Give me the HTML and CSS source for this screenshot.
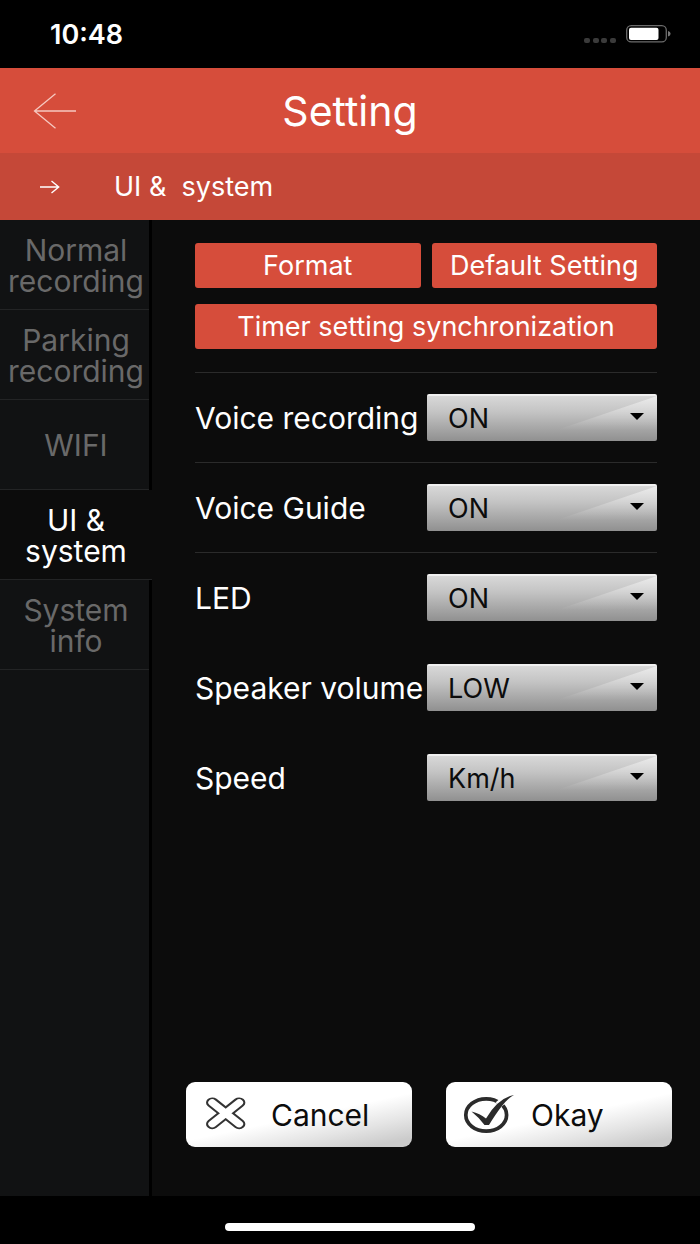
FILE: index.html
```html
<!DOCTYPE html>
<html lang="en">
<head>
    <meta charset="UTF-8">
    <meta name="viewport" content="width=device-width, initial-scale=1.0">
    <title>Setting</title>
    <link rel="stylesheet" href="styles.css">
</head>
<body>
    <!-- Status bar -->
    <div class="status-bar">
        <span class="time">10:48</span>
        <div class="status-icons">
            <svg width="32" height="5" viewBox="0 0 32 5" fill="#3a3a3a">
                <rect x="0" y="0" width="6" height="5" rx="2"/>
                <rect x="9" y="0" width="6" height="5" rx="2"/>
                <rect x="17" y="0" width="6" height="5" rx="2"/>
                <rect x="26" y="0" width="6" height="5" rx="2"/>
            </svg>
            <svg class="battery" width="45" height="18" viewBox="0 0 45 18">
                <rect x="0.7" y="0.7" width="39.6" height="16.2" rx="4.5" fill="none" stroke="#6b6b6b" stroke-width="1.3"/>
                <rect x="3" y="2.7" width="29.5" height="12.2" rx="2" fill="#fff"/>
                <path d="M42 6 Q44.6 6.5 44.6 8.8 T42 11.6 Z" fill="#777"/>
            </svg>
        </div>
    </div>

    <header class="header">
        <a class="back" href="#" aria-label="Back">
            <svg width="44" height="36" viewBox="0 0 44 36" fill="none" stroke="#f6c8c0" stroke-width="1.3">
                <path d="M22.5 0.8 L1.5 18 L22.5 35.2 M1.5 18 H43"/>
            </svg>
        </a>
        <h1>Setting</h1>
    </header>

    <div class="sub-header">
        <svg width="20" height="14" viewBox="0 0 20 14" fill="none" stroke="#fff" stroke-width="1.4">
            <path d="M0 7 H18.5 M11.5 1 L18.7 7 L11.5 13"/>
        </svg>
        <h2>UI &amp;  system</h2>
    </div>

    <div class="content">
        <nav class="sidebar">
            <a href="#">Normal recording</a>
            <a href="#">Parking recording</a>
            <a href="#">WIFI</a>
            <a href="#" class="active">UI &amp; system</a>
            <a href="#">System info</a>
        </nav>

        <main class="main">
            <div class="settings">
                <div class="actions">
                    <button type="button" class="btn-red">Format</button>
                    <button type="button" class="btn-red">Default Setting</button>
                    <button type="button" class="btn-red wide">Timer setting synchronization</button>
                </div>

                <div class="row line">
                    <label for="voiceRecording">Voice recording</label>
                    <select id="voiceRecording">
                        <option selected>ON</option>
                        <option>OFF</option>
                    </select>
                </div>
                <div class="row line">
                    <label for="voiceGuide">Voice Guide</label>
                    <select id="voiceGuide">
                        <option selected>ON</option>
                        <option>OFF</option>
                    </select>
                </div>
                <div class="row line">
                    <label for="led">LED</label>
                    <select id="led">
                        <option selected>ON</option>
                        <option>OFF</option>
                    </select>
                </div>
                <div class="row">
                    <label for="volume">Speaker volume</label>
                    <select id="volume">
                        <option selected>LOW</option>
                        <option>HIGH</option>
                    </select>
                </div>
                <div class="row">
                    <label for="speed">Speed</label>
                    <select id="speed">
                        <option selected>Km/h</option>
                        <option>MPH</option>
                    </select>
                </div>
            </div>

            <div class="footer-buttons">
                <button type="button" class="btn-white">
                    <svg width="52" height="42" viewBox="0 0 52 42">
                        <g transform="translate(23.7 19.3) scale(1.2 1)" fill="none" stroke-linecap="round">
                            <path d="M-11.2 -10.7 L11.2 10.7 M11.2 -10.7 L-11.2 10.7" stroke="#333" stroke-width="10.4"/>
                            <path d="M-11.2 -10.7 L11.2 10.7 M11.2 -10.7 L-11.2 10.7" stroke="#fff" stroke-width="6.6"/>
                        </g>
                    </svg>
                    <span>Cancel</span>
                </button>
                <button type="button" class="btn-white">
                    <svg width="52" height="42" viewBox="0 0 52 42">
                        <ellipse cx="24.2" cy="21" rx="20.4" ry="16.2" fill="none" stroke="#2b2b2b" stroke-width="3.7"/>
                        <path d="M36 11 L42 6" stroke="#fff" stroke-width="7"/>
                        <path d="M9.5 17.5 Q18 19.5 24 24.5 Q36 4 52 1 Q43 5 27 31 H22.5 Q17 23.500 9.5 17.5 Z" fill="#2b2b2b"/>
                    </svg>
                    <span>Okay</span>
                </button>
            </div>
        </main>
    </div>

    <div class="home-bar">
        <div class="home-indicator"></div>
    </div>
</body>
</html>
```
FILE: styles.css
```css
* {
    margin: 0;
    padding: 0;
    box-sizing: border-box;
}

body {
    font-family: Inter, 'Liberation Sans', sans-serif;
    background-color: #000;
    color: #fff;
    min-height: 100vh;
    display: flex;
    flex-direction: column;
}

svg {
    display: block;
    flex-shrink: 0;
}

a {
    color: inherit;
    text-decoration: none;
}

button, select {
    font-family: inherit;
    border: none;
    cursor: pointer;
}

/* Status bar */
.status-bar {
    height: 68px;
    padding: 0 29px 0 50px;
    display: flex;
    justify-content: space-between;
    align-items: center;
}

.time {
    font-size: 27px;
    font-weight: 600;
}

.status-icons {
    display: flex;
    align-items: flex-end;
    gap: 10px;
}

/* Header */
.header {
    height: 85px;
    padding: 0 33px;
    background-color: #d64d3b;
    display: grid;
    grid-template-columns: 44px 1fr 44px;
    align-items: center;
}

.header h1 {
    font-size: 41px;
    font-weight: 400;
    text-align: center;
}

.sub-header {
    height: 67px;
    padding: 0 40px;
    background-color: #c54838;
    display: flex;
    align-items: center;
    gap: 54px;
}

.sub-header h2 {
    font-size: 27px;
    font-weight: 400;
    white-space: pre;
}

/* Content */
.content {
    flex: 1;
    display: flex;
    background-color: #0c0c0c;
}

.sidebar {
    width: 152px;
    flex-shrink: 0;
    background-color: #111213;
    border-right: 3px solid #000;
}

.sidebar a {
    height: 90px;
    padding: 2px 0 0 3px;
    border-bottom: 1px solid #232425;
    display: flex;
    align-items: center;
    justify-content: center;
    text-align: center;
    font-size: 30px;
    line-height: 31px;
    color: #696969;
}

.sidebar a.active {
    margin-right: -3px;
    padding-left: 0;
    background-color: #0c0c0c;
    color: #fff;
}

.main {
    flex: 1;
    display: flex;
    flex-direction: column;
    justify-content: space-between;
    padding-bottom: 49px;
}

.settings {
    padding: 23px 43px 0;
}

.actions {
    display: grid;
    grid-template-columns: 1fr 1fr;
    gap: 16px 11px;
    margin-bottom: 23px;
}

.btn-red {
    height: 45px;
    border-radius: 3px;
    background-color: #d64d3b;
    color: #fff;
    font-size: 27px;
    white-space: nowrap;
}

.btn-red.wide {
    grid-column: 1 / 3;
}

.row {
    height: 90px;
    border-top: 1px solid transparent;
    display: flex;
    align-items: center;
    justify-content: space-between;
}

.row.line {
    border-top-color: #2b2b2b;
}

.row label {
    font-size: 30px;
    white-space: nowrap;
}

.row select {
    width: 230px;
    height: 47px;
    padding-left: 21px;
    appearance: none;
    border-top: 2px solid #f0f0f0;
    border-radius: 2px;
    font-size: 27px;
    color: #0c0c0c;
    /* arrow, gloss in the top right corner, base */
    background:
        url("data:image/svg+xml,%3Csvg xmlns='http://www.w3.org/2000/svg' width='14' height='7'%3E%3Cpath d='M0 0H14L7 7Z'/%3E%3C/svg%3E") no-repeat right 13px top 17px,
        url("data:image/svg+xml,%3Csvg xmlns='http://www.w3.org/2000/svg' width='100' height='45'%3E%3Cdefs%3E%3ClinearGradient id='g' x1='0' y1='0' x2='0' y2='1'%3E%3Cstop offset='0' stop-color='white' stop-opacity='.5'/%3E%3Cstop offset='1' stop-color='white' stop-opacity='0'/%3E%3C/linearGradient%3E%3C/defs%3E%3Cpath d='M100 0L0 34H100Z' fill='url(%23g)'/%3E%3C/svg%3E") no-repeat right top,
        linear-gradient(#d8d8d8, #c4c4c4 35%, #909090);
}

/* Cancel / Okay */
.footer-buttons {
    display: grid;
    grid-template-columns: 1fr 1fr;
    gap: 34px;
    padding: 0 28px 0 34px;
}

.btn-white {
    height: 65px;
    padding: 0 16px;
    border-radius: 9px;
    background: linear-gradient(168deg, #fff 52%, #e4e4e4 74%, #cbcbcb 92%);
    color: #0c0c0c;
    font-size: 30px;
    display: flex;
    align-items: center;
    gap: 17px;
}

/* Home bar */
.home-bar {
    height: 48px;
    display: flex;
    justify-content: center;
    align-items: center;
    padding-top: 14px;
}

.home-indicator {
    width: 250px;
    height: 8px;
    border-radius: 4px;
    background-color: #fff;
}
```
